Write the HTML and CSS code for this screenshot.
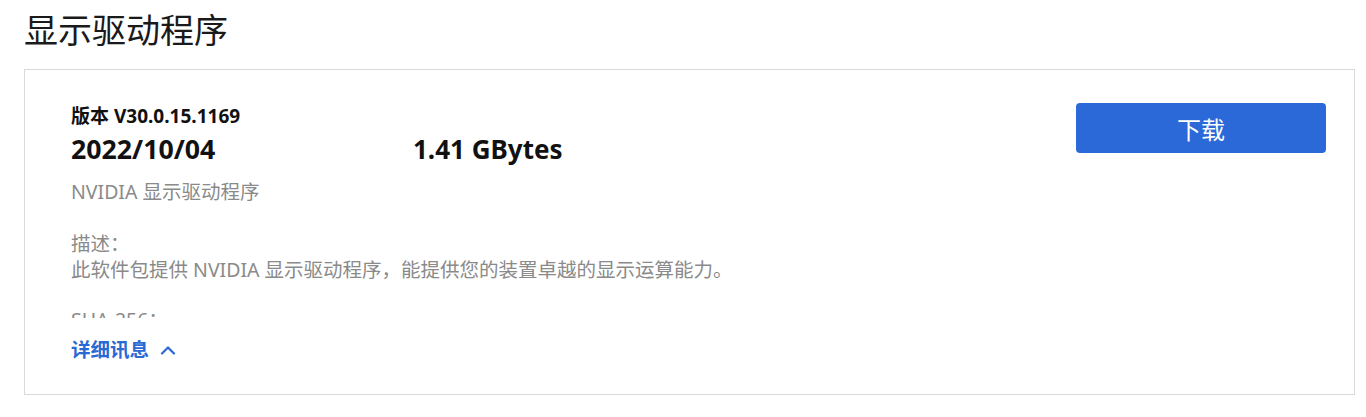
FILE: index.html
```html
<!DOCTYPE html>
<html lang="zh-CN">
<head>
<meta charset="utf-8">
<title>显示驱动程序</title>
<link rel="stylesheet" href="styles.css">
</head>
<body>
<h1 class="page-title">显示驱动程序</h1>
<section class="card">
  <div class="info">
    <div class="version">版本 V30.0.15.1169</div>
    <div class="meta-row">
      <span class="date">2022/10/04</span>
      <span class="size">1.41 GBytes</span>
    </div>
    <div class="category">NVIDIA 显示驱动程序</div>
    <div class="details">
      <div class="muted">描述：</div>
      <div class="muted">此软件包提供 NVIDIA 显示驱动程序，能提供您的装置卓越的显示运算能力。</div>
      <div class="muted sha">SHA-256：</div>
    </div>
    <a class="toggle" href="#"><span>详细讯息</span><svg class="chev" width="16" height="10" viewBox="0 0 16 10"><path d="M2 8.5 L8 2.5 L14 8.5" fill="none" stroke="#2a69d4" stroke-width="2.2" stroke-linecap="round" stroke-linejoin="round"/></svg></a>
  </div>
  <button class="download" type="button">下载</button>
</section>
</body>
</html>
```
FILE: styles.css
```css
html, body {
  margin: 0;
  padding: 0;
  background: #ffffff;
}
body {
  font-family: "Noto Sans", "Noto Sans CJK SC", sans-serif;
  color: #111;
}
.page-title {
  margin: 10px 0 19px 24px;
  font-size: 34px;
  line-height: 40px;
  font-weight: 400;
  color: #1a1a1a;
}
.card {
  margin: 0 11px 0 24px;
  border: 1px solid #d9d9d9;
  padding: 33px 28px 31px 46px;
  display: flex;
  justify-content: space-between;
  align-items: flex-start;
}
.info {
  padding-top: 3px;
  flex: 1;
}
.version {
  font-size: 19px;
  line-height: 20px;
  font-weight: 700;
}
.meta-row {
  display: flex;
  font-size: 26.7px;
  line-height: 32px;
  font-weight: 700;
  margin-top: 7px;
}
.date {
  width: 342px;
}
.size {
  font-size: 26px;
}
.category {
  margin-top: 14px;
  font-size: 19.5px;
  line-height: 26px;
  color: #8a8a8a;
}
.details {
  margin-top: 26px;
  height: 87px;
  overflow: hidden;
}
.muted {
  font-size: 19.5px;
  line-height: 26px;
  color: #8a8a8a;
}
.sha {
  margin-top: 24px;
}
.toggle {
  display: flex;
  align-items: center;
  gap: 11px;
  margin-top: 19px;
  font-size: 19.5px;
  line-height: 26px;
  font-weight: 700;
  color: #2a69d4;
  text-decoration: none;
}
.download {
  width: 250px;
  height: 50px;
  border: none;
  border-radius: 4px;
  background: #2b69d8;
  color: #fff;
  font-family: inherit;
  font-size: 24px;
  cursor: pointer;
}
```
